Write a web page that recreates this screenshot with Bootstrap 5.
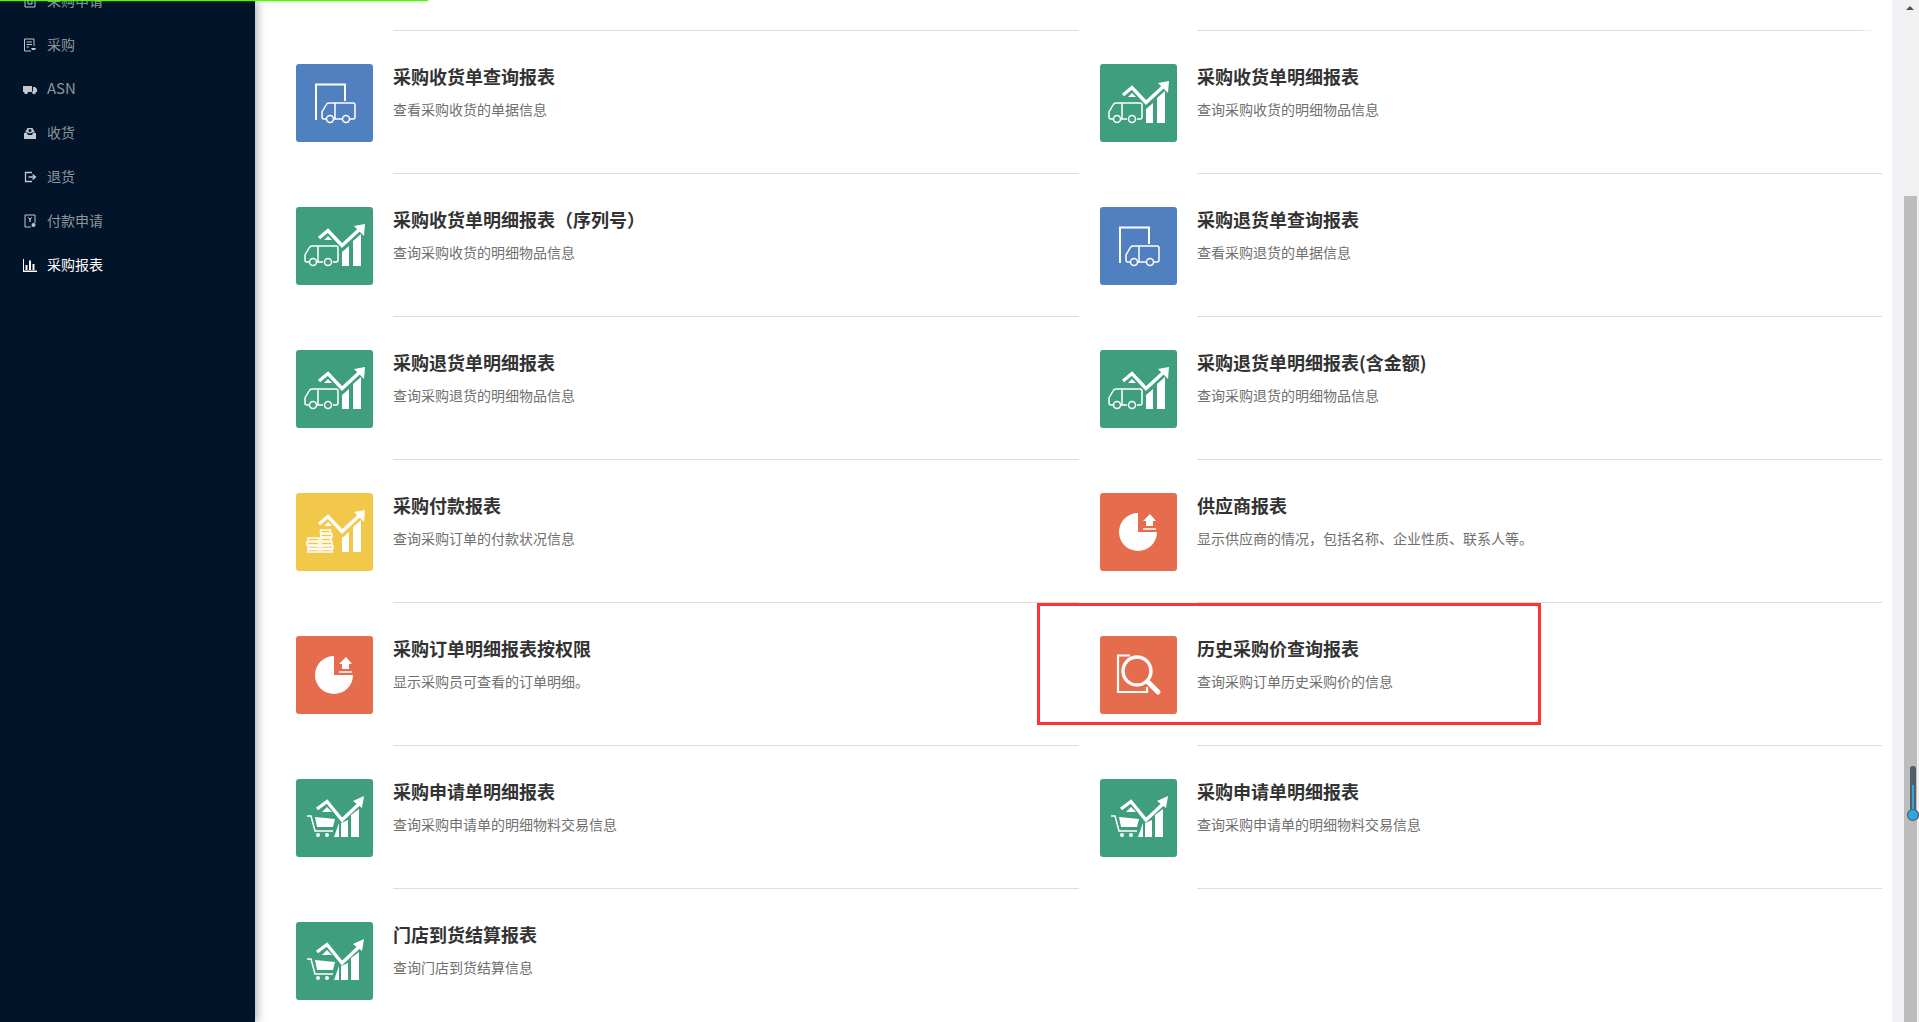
<!DOCTYPE html>
<html lang="zh-CN">
<head>
<meta charset="utf-8">
<title>采购报表</title>
<link href="https://cdn.jsdelivr.net/npm/bootstrap@5.3.0/dist/css/bootstrap.min.css" rel="stylesheet">
<style>
html,body{height:100%;overflow:hidden;background:#fff;font-family:"Noto Sans CJK SC","Liberation Sans",sans-serif}
.load-bar{position:fixed;left:0;top:0;width:428px;height:1px;background:#4cff00;box-shadow:0 0 2px #4cff00;z-index:20}
.shell{height:1022px}
.side{width:255px;background:#021429;position:relative;z-index:2;box-shadow:3px 0 8px rgba(120,125,140,.55)}
.side-list{margin-top:-21px}
.side-link{height:44px;padding:0 0 0 23px;gap:10px;color:#8d949d;font-size:14px;line-height:42px}
.side-link:hover{color:#8d949d}
.side-link.on,.side-link.on:hover{color:#fff}
.side-link span{height:44px}
.side-ico{width:14px;height:14px;flex:none;color:#c4c8ce}
.on .side-ico{color:#fff}
.latin-label{font-size:15px}
.main-pane{padding:30px 0 0 41px;min-width:0;overflow:hidden;background:#fff}
.rep-grid{display:grid;grid-template-columns:804px 782px}
.rep-item{height:143px;position:relative}
.rep-tile{width:77px;height:78px;margin-top:34px;border-radius:3px;flex:none}
.rep-tile svg{display:block;width:77px;height:78px}
.t-blue{background:#5180c1}.t-green{background:#3f9e7d}.t-yellow{background:#f2c84b}.t-orange{background:#e56d4e}
.rep-body{margin-left:20px;width:686px;border-top:1px solid #ddd;padding-top:33px}
.rep-grid>.rep-item:nth-child(even) .rep-body{width:685px}
.rep-name{font-size:18px;line-height:25px;font-weight:700;color:#333;margin:0 0 10px}
.rep-desc{font-size:14px;line-height:20px;color:#6f6f6f;margin:0}
.rep-blank{margin-left:97px;width:685px;border-top:1px solid #ddd}
.fade-line{border-top:1px solid;border-image:linear-gradient(to right,#ddd calc(100% - 24px),transparent calc(100% - 7px)) 1}
.red-frame{position:absolute;left:-63px;top:1px;width:504px;height:122px;border:3px solid #f33;pointer-events:none}
.gutter{width:11px;background:#f0f1f5;flex:none}
.bar-track{width:16px;background:#f1f1f1;position:relative;flex:none}
.bar-up{position:absolute;left:3px;top:6px;width:0;height:0;border-left:4px solid transparent;border-right:4px solid transparent;border-bottom:4px solid #505050}
.bar-thumb{position:absolute;left:1px;top:196px;bottom:0;width:13px;background:#bcbcbc}
.gauge{position:absolute;left:1906px;top:764px;width:13px;height:60px;z-index:10}
</style>
</head>
<body>
<svg width="0" height="0" class="position-absolute">
<defs>
<symbol id="up-chart" viewBox="0 0 77 78">
<path d="M23 31 32 23.500 46 38.500 65 21" fill="none" stroke="#fff" stroke-width="3.400"/>
<path d="M58 19 69 17 68 29Z" fill="#fff"/>
<path d="M32 29l4 4h-8z" fill="#fff"/>
<path d="M46 45l7-6v20h-7zM57 34l8-7v32h-8z" fill="#fff"/>
</symbol>
<symbol id="truck-a" viewBox="0 0 77 78">
<path d="M20 56V20.500H49V37" fill="none" stroke="#fff" stroke-width="2"/>
<path d="M31 55h-3q-2 0-2-2v-5l4-7q1-2 3-2h24q2 0 2 2v12q0 2-2 2h-4M38 55h8M39 39v16" fill="none" stroke="#fff" stroke-width="1.500"/>
<circle cx="34" cy="55" r="3.500" fill="none" stroke="#fff" stroke-width="1.500"/>
<circle cx="50" cy="55" r="3.500" fill="none" stroke="#fff" stroke-width="1.500"/>
</symbol>
<symbol id="truck-b" viewBox="0 0 77 78">
<use href="#up-chart"/>
<path d="M13 55h-2q-2 0-2-2v-5l4-7q1-2 3-2h24q2 0 2 2v12q0 2-2 2h-3M21 55h6M22 39v16" fill="#3f9e7d" stroke="#fff" stroke-width="1.500"/>
<circle cx="17" cy="55" r="3.500" fill="#3f9e7d" stroke="#fff" stroke-width="1.500"/>
<circle cx="32" cy="55" r="3.500" fill="#3f9e7d" stroke="#fff" stroke-width="1.500"/>
</symbol>
<symbol id="coins" viewBox="0 0 77 78">
<use href="#up-chart"/>
<g fill="none" stroke="#fff" stroke-width="1.500">
<rect x="12" y="45" width="11" height="3"/><rect x="11" y="49" width="12" height="3"/><rect x="12" y="53" width="11" height="2.500"/><rect x="12" y="56.500" width="11" height="2.500"/>
<rect x="24.500" y="37" width="10" height="3"/><rect x="25" y="41" width="11" height="3"/><rect x="25" y="45" width="10" height="3"/><rect x="25" y="49" width="11" height="3"/><rect x="25" y="53" width="12" height="2.500"/><rect x="25" y="56.500" width="11" height="2.500"/>
</g>
</symbol>
<symbol id="pie" viewBox="0 0 77 78">
<path d="M38 20A19 19 0 1 0 57 39H38Z" fill="#fff"/>
<path d="M50 21 56 28H53V33H46V28H43Z" fill="#fff"/>
<path d="M43 36h13" stroke="#fff" stroke-width="1.500"/>
</symbol>
<symbol id="lens" viewBox="0 0 77 78">
<path d="M30 19.500H18V56H47V51" fill="none" stroke="#fff" stroke-width="2.200"/>
<circle cx="37" cy="35" r="14" fill="#e56d4e" stroke="#fff" stroke-width="3.400"/>
<path d="M48 46 58 56" stroke="#fff" stroke-width="5" stroke-linecap="round"/>
</symbol>
<symbol id="cart" viewBox="0 0 77 78">
<path d="M21 30 31 22.500 46 41 64 24" fill="none" stroke="#fff" stroke-width="3.400"/>
<path d="M57 22 68 17 66 29Z" fill="#fff"/>
<path d="M31 28l5 5h-10z" fill="#fff"/>
<path d="M38 58l5-14v14zM45 44l7-3v17h-7zM55 36l8-6v28h-8z" fill="#fff"/>
<path d="M11 37h4l4 15h18" fill="none" stroke="#fff" stroke-width="1.500"/>
<path d="M19 38 39 40 37 48H21Z" fill="#fff"/>
<circle cx="22" cy="56" r="2" fill="#fff"/><circle cx="31" cy="56" r="2" fill="#fff"/>
</symbol>
</defs>
</svg>
<div class="load-bar"></div>
<div class="shell d-flex">
<aside class="side flex-shrink-0">
<nav class="nav flex-column side-list">
<a class="nav-link side-link d-flex align-items-center" href="#"><svg class="side-ico" viewBox="0 0 14 14" fill="none" stroke="currentColor"><path d="M2 1h10v12H2zM5 5h4v5H5z"/></svg><span>采购申请</span></a>
<a class="nav-link side-link d-flex align-items-center" href="#"><svg class="side-ico" viewBox="0 0 14 14" fill="none" stroke="currentColor"><path d="M8 13H1.500V1h9.500v7M3.500 4H9M3.500 6.500H9M3.500 9H6"/><path d="M8 10h5l-1 2H9z" fill="currentColor" stroke="none"/></svg><span>采购</span></a>
<a class="nav-link side-link d-flex align-items-center" href="#"><svg class="side-ico" viewBox="0 0 14 14" fill="currentColor"><path d="M0 4h9v6H0zM10 5h2l2 2v3h-4z"/><circle cx="3" cy="10.500" r="1.800"/><circle cx="11" cy="10.500" r="1.800"/></svg><span class="latin-label">ASN</span></a>
<a class="nav-link side-link d-flex align-items-center" href="#"><svg class="side-ico" viewBox="0 0 14 14" fill="currentColor"><path d="M1 7h3l1 2h4l1-2h3v6H1zM2 6.500 4.500 2h5L12 6.500H9.500L7 7.500 4.500 6.500z"/><circle cx="7" cy="4.500" r="1.500" fill="#021429"/></svg><span>收货</span></a>
<a class="nav-link side-link d-flex align-items-center" href="#"><svg class="side-ico" viewBox="0 0 14 14" fill="none" stroke="currentColor" stroke-width="1.300"><path d="M9 2.500H2.500v9H9"/><path d="M5.500 7H12M9.500 4.500 12.500 7 9.500 9.500" /></svg><span>退货</span></a>
<a class="nav-link side-link d-flex align-items-center" href="#"><svg class="side-ico" viewBox="0 0 14 14" fill="none" stroke="currentColor"><path d="M8 13H2V1h10v8"/><path d="M5.500 3.500 7 5.500l1.500-2M7 5.500V8" stroke="#fff"/><circle cx="10.500" cy="11" r="2" fill="currentColor" stroke="none"/></svg><span>付款申请</span></a>
<a class="nav-link side-link on d-flex align-items-center" href="#"><svg class="side-ico" viewBox="0 0 14 14" fill="currentColor"><path d="M0 1h1v11.500h14V14H0zM2.500 7h2v5h-2zM6 2.500h2V12H6zM9.500 6h2v6h-2z"/></svg><span>采购报表</span></a>
</nav>
</aside>
<main class="main-pane flex-grow-1">
<div class="rep-grid">
<div class="rep-item d-flex"><div class="rep-tile t-blue"><svg><use href="#truck-a"/></svg></div><div class="rep-body"><p class="rep-name">采购收货单查询报表</p><p class="rep-desc">查看采购收货的单据信息</p></div></div>
<div class="rep-item d-flex"><div class="rep-tile t-green"><svg><use href="#truck-b"/></svg></div><div class="rep-body fade-line"><p class="rep-name">采购收货单明细报表</p><p class="rep-desc">查询采购收货的明细物品信息</p></div></div>
<div class="rep-item d-flex"><div class="rep-tile t-green"><svg><use href="#truck-b"/></svg></div><div class="rep-body"><p class="rep-name">采购收货单明细报表（序列号）</p><p class="rep-desc">查询采购收货的明细物品信息</p></div></div>
<div class="rep-item d-flex"><div class="rep-tile t-blue"><svg><use href="#truck-a"/></svg></div><div class="rep-body"><p class="rep-name">采购退货单查询报表</p><p class="rep-desc">查看采购退货的单据信息</p></div></div>
<div class="rep-item d-flex"><div class="rep-tile t-green"><svg><use href="#truck-b"/></svg></div><div class="rep-body"><p class="rep-name">采购退货单明细报表</p><p class="rep-desc">查询采购退货的明细物品信息</p></div></div>
<div class="rep-item d-flex"><div class="rep-tile t-green"><svg><use href="#truck-b"/></svg></div><div class="rep-body"><p class="rep-name">采购退货单明细报表(含金额)</p><p class="rep-desc">查询采购退货的明细物品信息</p></div></div>
<div class="rep-item d-flex"><div class="rep-tile t-yellow"><svg><use href="#coins"/></svg></div><div class="rep-body"><p class="rep-name">采购付款报表</p><p class="rep-desc">查询采购订单的付款状况信息</p></div></div>
<div class="rep-item d-flex"><div class="rep-tile t-orange"><svg><use href="#pie"/></svg></div><div class="rep-body"><p class="rep-name">供应商报表</p><p class="rep-desc">显示供应商的情况，包括名称、企业性质、联系人等。</p></div></div>
<div class="rep-item d-flex"><div class="rep-tile t-orange"><svg><use href="#pie"/></svg></div><div class="rep-body"><p class="rep-name">采购订单明细报表按权限</p><p class="rep-desc">显示采购员可查看的订单明细。</p></div></div>
<div class="rep-item d-flex"><div class="red-frame"></div><div class="rep-tile t-orange"><svg><use href="#lens"/></svg></div><div class="rep-body"><p class="rep-name">历史采购价查询报表</p><p class="rep-desc">查询采购订单历史采购价的信息</p></div></div>
<div class="rep-item d-flex"><div class="rep-tile t-green"><svg><use href="#cart"/></svg></div><div class="rep-body"><p class="rep-name">采购申请单明细报表</p><p class="rep-desc">查询采购申请单的明细物料交易信息</p></div></div>
<div class="rep-item d-flex"><div class="rep-tile t-green"><svg><use href="#cart"/></svg></div><div class="rep-body"><p class="rep-name">采购申请单明细报表</p><p class="rep-desc">查询采购申请单的明细物料交易信息</p></div></div>
<div class="rep-item d-flex"><div class="rep-tile t-green"><svg><use href="#cart"/></svg></div><div class="rep-body"><p class="rep-name">门店到货结算报表</p><p class="rep-desc">查询门店到货结算信息</p></div></div>
<div class="rep-item"><div class="rep-blank"></div></div>
</div>
</main>
<div class="gutter"></div>
<div class="bar-track"><div class="bar-up"></div><div class="bar-thumb"></div></div>
</div>
<svg class="gauge" viewBox="0 0 13 60">
<rect x="4" y="2" width="6" height="50" rx="2.500" fill="#4f5f6b"/>
<rect x="6" y="21" width="2" height="30" fill="#2ea7de"/>
<circle cx="7" cy="51" r="5.500" fill="#2ea7de" stroke="#4f5f6b" stroke-width="1.200"/>
</svg>
</body>
</html>
